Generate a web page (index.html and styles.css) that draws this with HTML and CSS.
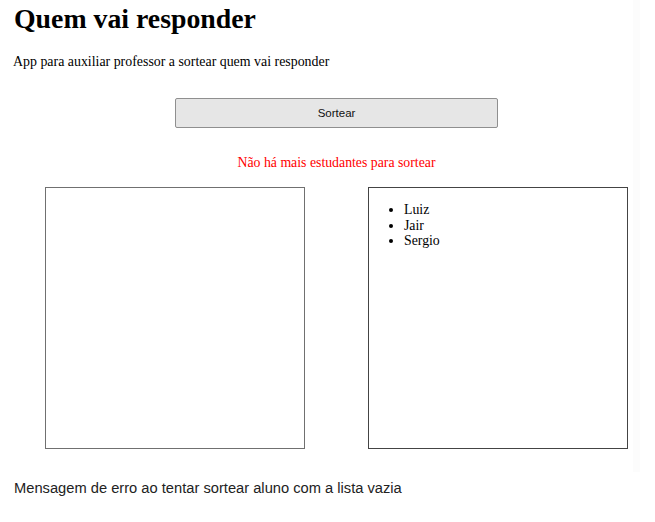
FILE: index.html
```html
<!DOCTYPE html>
<html lang="pt-BR">
<head>
<meta charset="utf-8">
<title>Quem vai responder</title>
<link rel="stylesheet" href="styles.css">
</head>
<body>
  <div class="shot">
    <div class="page">
      <h1 class="title">Quem vai responder</h1>
      <p class="subtitle">App para auxiliar professor a sortear quem vai responder</p>
      <div class="actions">
        <button class="draw-btn" type="button">Sortear</button>
      </div>
      <p class="error">Não há mais estudantes para sortear</p>
      <div class="boxes">
        <div class="box box-left"></div>
        <div class="box box-right">
          <ul class="students">
            <li>Luiz</li>
            <li>Jair</li>
            <li>Sergio</li>
          </ul>
        </div>
      </div>
    </div>
  </div>
  <p class="caption">Mensagem de erro ao tentar sortear aluno com a lista vazia</p>
</body>
</html>
```

FILE: styles.css
```css
html, body {
  margin: 0;
  padding: 0;
  background: #fff;
}

body {
  width: 655px;
  height: 522px;
  overflow: hidden;
}

.shot {
  width: 633px;
  height: 472px;
  overflow: hidden;
  border-right: 7px solid #fcfcfc;
  font-family: "Liberation Serif", "Times New Roman", serif;
  color: #000;
}

.page {
  width: 673px;
  padding-top: 3px;
}

.title {
  margin: 0 0 0 14px;
  font-size: 27.8px;
  line-height: 32px;
  font-weight: bold;
}

.subtitle {
  margin: 19px 0 0 13px;
  font-size: 13.9px;
  line-height: 16px;
}

.actions {
  display: flex;
  justify-content: center;
  margin-top: 28px;
}

.draw-btn {
  width: 323px;
  height: 30px;
  margin: 0;
  padding: 0;
  background: #e6e6e6;
  border: 1px solid #8f8f8f;
  border-radius: 2px;
  font-family: "Liberation Sans", Arial, sans-serif;
  font-size: 11.5px;
  color: #111;
}

.error {
  margin: 27px 0 0;
  text-align: center;
  color: #ff0000;
  font-size: 13.8px;
  line-height: 16px;
}

.boxes {
  display: flex;
  justify-content: center;
  gap: 63px;
  margin-top: 16px;
}

.box {
  width: 258px;
  height: 260px;
  border: 1px solid #444;
}

.box-left {
  border-color: #707070;
}

.students {
  margin: 14px 0 0;
  padding-left: 35px;
  font-size: 13.8px;
  line-height: 15.7px;
}

.caption {
  margin: 8px 0 0 14px;
  font-family: "Liberation Sans", Arial, sans-serif;
  font-size: 14.7px;
  line-height: 16px;
  color: #222;
}
```
